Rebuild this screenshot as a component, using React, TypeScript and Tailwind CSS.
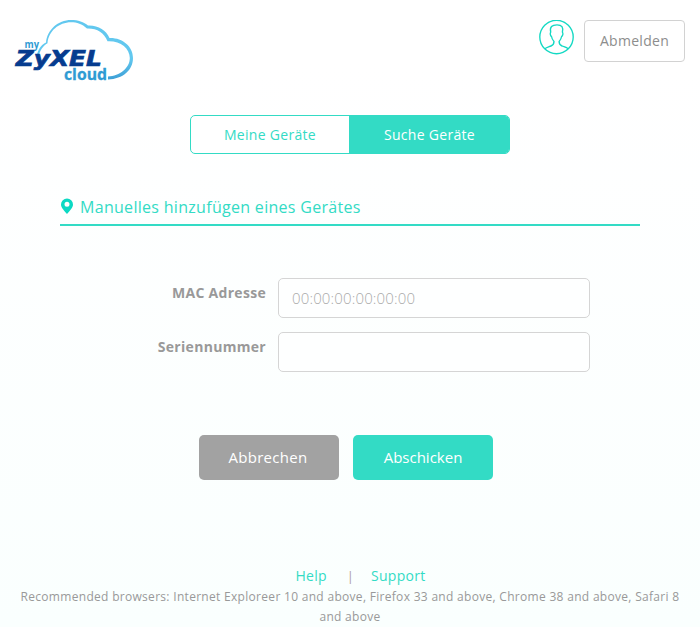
import React from "react";

function CloudLogo() {
  return (
    <svg width="150" height="80" viewBox="0 0 150 80" role="img" aria-label="my ZyXEL cloud" className="tracking-normal">
      <defs>
        <linearGradient id="cloud" x1="0" y1="0" x2="0" y2="1">
          <stop offset="0" stopColor="#62c8ef" />
          <stop offset="0.65" stopColor="#62c8ef" />
          <stop offset="1" stopColor="#3d9fd6" />
        </linearGradient>
      </defs>
      <path
        d="M36.500 47C37.500 40 41 35 46 32.500C47 20 58 10 71 10C78 10 84 12 88 15.500C98 15 106 20 109.500 28C122 27.500 133 36 133 48C133 60 123 69 108 69.500V66.500C120 66 129.800 58 129.800 48C129.800 38 120 30.500 107.500 31.200C104 22.500 97 18.200 87 18.500C82 14 77 12.300 71 12.300C59 12.300 48.500 21 47.500 33.300C43 36 40 40 38.500 47Z"
        fill="url(#cloud)"
      />
      <text x="24.500" y="37.500" textLength="14.500" lengthAdjust="spacingAndGlyphs" className="fill-[#2f9bd3] text-[10.500px] font-bold">my</text>
      <text x="15.800" y="55.800" textLength="86" lengthAdjust="spacingAndGlyphs" stroke="#063c8f" strokeWidth="0.7" className="fill-[#063c8f] font-['DejaVu_Sans',sans-serif] text-[21.500px] font-bold italic">ZyXEL</text>
      <text x="64" y="69.500" textLength="43" lengthAdjust="spacingAndGlyphs" stroke="#2f9bd3" strokeWidth="0.3" className="fill-[#2f9bd3] text-[15.500px] font-bold">cloud</text>
    </svg>
  );
}

function UserIcon() {
  return (
    <svg width="36" height="36" viewBox="0 0 36 36" fill="none" stroke="#12d9c3" strokeWidth="1.35" aria-hidden="true">
      <circle cx="17.500" cy="17" r="16.700" />
      <path d="M5.800 28.800C7.500 27.500 9.500 27 12 26C14.500 25 15 24 15 21.500C13.500 20 12.800 18.300 12.500 16.500C11.200 16 10.900 13 11.700 12.200C10.500 7 13 4.800 18 4.800C23 4.800 24.500 7.500 23.400 12.200C24.300 13 24 16 22.600 16.500C22.300 18.300 21.500 20 20.100 21.500C20.100 24 20.500 25 23.100 26C25.500 27 27.500 27.500 29.200 28.800" strokeLinejoin="round" />
    </svg>
  );
}

function Field({ id, label, placeholder }: { id: string; label: string; placeholder?: string }) {
  return (
    <div className="flex">
      <label htmlFor={id} className="w-[206px] pt-[5px] text-right font-bold leading-5 text-[#999]">{label}</label>
      <input id={id} placeholder={placeholder} className="ml-3 h-10 w-[312px] rounded-[5px] border border-[#d5d5d5] bg-white/50 px-[13px] text-[15px] font-light tracking-[0.15px] outline-none placeholder:text-[#aaa]" />
    </div>
  );
}

export default function App() {
  return (
    <main className="flex h-[627px] w-[700px] flex-col overflow-hidden bg-linear-to-b from-white from-10% to-[#fafffe] font-['Open_Sans',sans-serif] text-[14px] tracking-[0.3px] text-[#999]">
      <header className="flex h-[90px] justify-between pt-[10px] pr-[15px]">
        <CloudLogo />
        <div className="flex gap-[9px] pt-[10px]">
          <UserIcon />
          <button className="h-[42px] w-[101px] rounded-[4px] border border-[#d2d2d2] bg-white pb-[2px] text-[#8d8d8d]">Abmelden</button>
        </div>
      </header>

      <nav className="mx-auto mt-[25px] flex h-[39px] w-[320px] overflow-hidden rounded-[5px] border border-[#33dbc5] bg-white">
        <button className="w-[158px] text-[#33dbc5]">Meine Geräte</button>
        <button className="flex-1 bg-[#33dbc5] pl-px font-medium text-white">Suche Geräte</button>
      </nav>

      <h1 className="mx-[60px] mt-[38px] flex h-[34px] items-start border-b-2 border-[#33dbc5] text-[16px] leading-[30px] text-[#33dbc5]">
        <svg width="14" height="17" viewBox="0 0 14 17" className="mt-[6px] mr-[6px]" aria-hidden="true">
          <path fillRule="evenodd" fill="#0bd9c3" d="M7 .5A6 6 0 0 0 1 6.500C1 9.500 4 12.500 7 16C10 12.500 13 9.500 13 6.500A6 6 0 0 0 7 .5ZM7 3.700A2.500 2.500 0 1 1 7 8.700A2.500 2.500 0 0 1 7 3.700Z" />
        </svg>
        Manuelles hinzufügen eines Gerätes
      </h1>

      <form className="mt-[52px] flex flex-col gap-[14px] px-[60px]">
        <Field id="mac" label="MAC Adresse" placeholder="00:00:00:00:00:00" />
        <Field id="serial" label="Seriennummer" />
      </form>

      <div className="mt-[63px] flex gap-[14px] pl-[199px] text-[15px] font-medium text-white">
        <button className="h-[45px] w-[140px] rounded-[5px] bg-[#a2a2a2] pr-[2px]">Abbrechen</button>
        <button className="h-[45px] w-[140px] rounded-[5px] bg-[#33dbc5] tracking-normal">Abschicken</button>
      </div>

      <footer className="mt-[86px] text-center text-[12px] leading-5">
        <div className="flex h-[21px] justify-center pl-[21px] text-[14px] text-[#33dbc5]">
          <a>Help</a>
          <span className="w-[44px] pl-[3px] pt-px text-[12px] text-[#a99]">|</span>
          <a>Support</a>
        </div>
        <p className="px-[10px]">Recommended browsers: Internet Exploreer 10 and above, Firefox 33 and above, Chrome 38 and above, Safari 8 and above</p>
      </footer>
    </main>
  );
}
